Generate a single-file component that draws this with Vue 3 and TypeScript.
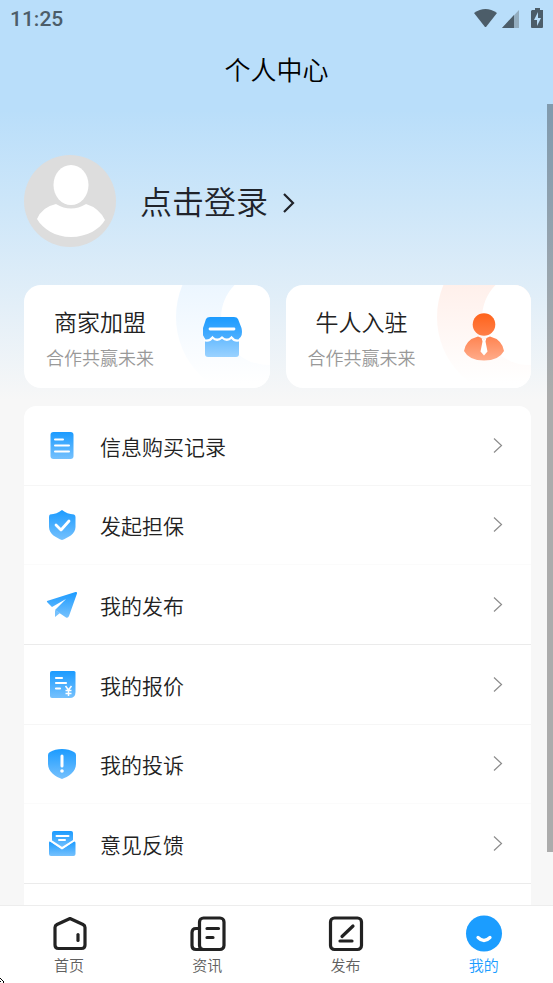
<script setup lang="ts">
import { ref } from 'vue'

interface Entry {
  key: string
  label: string
}

const promos: Entry[] = [
  { key: 'shop', label: '商家加盟' },
  { key: 'expert', label: '牛人入驻' },
]

const entries: Entry[] = [
  { key: 'records', label: '信息购买记录' },
  { key: 'guarantee', label: '发起担保' },
  { key: 'posts', label: '我的发布' },
  { key: 'quotes', label: '我的报价' },
  { key: 'complaints', label: '我的投诉' },
  { key: 'feedback', label: '意见反馈' },
]

const tabs: Entry[] = [
  { key: 'home', label: '首页' },
  { key: 'news', label: '资讯' },
  { key: 'publish', label: '发布' },
  { key: 'mine', label: '我的' },
]

const active = ref('mine')
</script>

<template>
  <div class="app">
    <svg class="defs" width="0" height="0" aria-hidden="true">
      <defs>
        <linearGradient id="blue" x1="0" y1="0" x2="0" y2="1">
          <stop offset="0" stop-color="#1b9bff" />
          <stop offset="1" stop-color="#76c1fd" />
        </linearGradient>
        <linearGradient id="blueRoof" x1="0" y1="0" x2="0" y2="1">
          <stop offset="0" stop-color="#1b9bff" />
          <stop offset="1" stop-color="#4fb0ff" />
        </linearGradient>
        <linearGradient id="blueLight" x1="0" y1="0" x2="0" y2="1">
          <stop offset="0" stop-color="#65baff" />
          <stop offset="1" stop-color="#9ad2ff" />
        </linearGradient>
        <linearGradient id="orange" x1="0" y1="0" x2="0" y2="1">
          <stop offset="0" stop-color="#ff631b" />
          <stop offset="1" stop-color="#ff7f48" />
        </linearGradient>
        <linearGradient id="orangeLight" x1="0" y1="0" x2="0" y2="1">
          <stop offset="0" stop-color="#ff8451" />
          <stop offset="1" stop-color="#ffac8b" />
        </linearGradient>
        <linearGradient id="ring-shop" gradientUnits="userSpaceOnUse" x1="0" y1="0" x2="0" y2="98">
          <stop offset="0" stop-color="#ecf6ff" />
          <stop offset="1" stop-color="#ffffff" />
        </linearGradient>
        <linearGradient id="ring-expert" gradientUnits="userSpaceOnUse" x1="0" y1="0" x2="0" y2="98">
          <stop offset="0" stop-color="#fff0eb" />
          <stop offset="1" stop-color="#ffffff" />
        </linearGradient>
      </defs>
    </svg>

    <header class="top">
      <div class="status">
        <span class="clock">11:25</span>
        <svg class="signals" width="72" height="22" viewBox="0 0 72 22" aria-hidden="true">
          <path d="M0 5Q11.500-3 23 5L12 19h-1z" fill="#4c5d69" />
          <path d="M45 2v18H28z" fill="#93adbf" />
          <path d="M40 7v13H28z" fill="#4c5d69" />
          <path d="M58 2h3V0h5v2h3v17a1 1 0 0 1-1 1H58a1 1 0 0 1-1-1V3z" fill="#4c5d69" />
          <path d="M64 4l-4 8h3v6l4-8h-3z" fill="#b9defa" />
        </svg>
      </div>
      <h1 class="title">个人中心</h1>
    </header>

    <main class="content">
      <a class="login" href="#login">
        <svg class="avatar" viewBox="0 0 92 92" aria-hidden="true">
          <circle cx="46" cy="46" r="46" fill="#dddddd" />
          <ellipse cx="47" cy="30" rx="17.500" ry="20" fill="#fff" />
          <path d="M32 49Q18 52 13 64c6 10 18 18 34 18s29-8 34-17Q75 53 62 49Q47 58 32 49z" fill="#fff" />
        </svg>
        <span class="login-text">点击登录</span>
        <svg class="go" width="12" height="20" viewBox="0 0 12 20" aria-hidden="true">
          <path d="M1 1l9 9-9 9" fill="none" stroke="#20232a" stroke-width="2.200" />
        </svg>
      </a>

      <section class="promos">
        <a v-for="p in promos" :key="p.key" class="promo" :href="'#' + p.key">
          <svg class="ring" width="94" height="103" viewBox="0 0 94 103" aria-hidden="true">
            <circle cx="82" cy="32" r="82" :fill="`url(#ring-${p.key})`" />
            <circle cx="92" cy="33" r="47" fill="#fff" />
          </svg>
          <span class="promo-text">
            <strong>{{ p.label }}</strong>
            <small>合作共赢未来</small>
          </span>
          <svg v-if="p.key === 'shop'" class="promo-icon" viewBox="0 0 40 48" aria-hidden="true">
            <path d="M2 24h34v17q0 3-3 3H5q-3 0-3-3z" fill="url(#blueLight)" />
            <path d="M7 4h24q3 0 4 2l3.500 9q2 9-4 11.500q-3 .500-6-2.500q-4.500 4-9.500 0q-5 4-9.500 0q-3 3-6 2.500Q-2 23 0 15L3 6q1-2 4-2z" fill="url(#blueRoof)" />
            <path d="M1 27q5 2 8.500-2.500q4.500 4.500 9.500 0q5 4.500 9.500 0q3.500 4.500 8.500 2.500" fill="none" stroke="#fff" stroke-width="2.200" />
            <path d="M7 16h24" stroke="#fff" stroke-width="2.800" stroke-linecap="round" />
          </svg>
          <svg v-else class="promo-icon" viewBox="0 0 40 48" aria-hidden="true">
            <circle cx="20" cy="11.500" r="11.300" fill="url(#orange)" />
            <path d="M14 23.500q3 1 6 3q3-2 6-3q12 3 14 14.500q-5 9.500-20 9.500T0 38Q2 26.500 14 23.500z" fill="url(#orangeLight)" />
            <path d="M17.500 24.500l2.500 2 2.500-2-1 4 2 10-3.500 4-3.500-4 2-10z" fill="#fff" />
          </svg>
        </a>
      </section>

      <nav class="list" aria-label="功能">
        <a v-for="e in entries" :key="e.key" class="row" :href="'#' + e.key">
          <svg class="row-icon" viewBox="0 0 30 30" aria-hidden="true">
            <template v-if="e.key === 'records'">
              <rect x="3.500" y="1" width="23" height="27" rx="3" fill="url(#blue)" />
              <path d="M8 8.500h8M8 14.500h14M8 20.500h14" stroke="#fff" stroke-width="2" stroke-linecap="round" />
            </template>
            <template v-else-if="e.key === 'guarantee'">
              <path d="M15 0Q20 4 27 4.500Q28.500 5 28.500 7v10c0 7-8 11-13.500 13C9.500 28 2 24 2 17V7Q2 5 3 4.500Q10 4 15 0z" fill="url(#blue)" />
              <path d="M9 15l5 5 8-9" fill="none" stroke="#fff" stroke-width="2.800" stroke-linecap="round" stroke-linejoin="round" />
            </template>
            <template v-else-if="e.key === 'posts'">
              <path d="M0 11L28.500 2Q30.500 1.500 30 3.500L22 26q-1 2.500-3 1.500L8 20 19 9 5 17 .500 12.500Q-.500 11.500 0 11z" fill="url(#blue)" />
              <path d="M8 20l5 3-5 4z" fill="#76c1fd" />
            </template>
            <template v-else-if="e.key === 'quotes'">
              <path d="M5 1h22q1.500 0 1.500 1.500V22q0 6-6 6H5q-2 0-2-2V3q0-2 2-2z" fill="url(#blue)" />
              <path d="M9 8h6M9 13h10M9 18.500h4" stroke="#fff" stroke-width="2.200" stroke-linecap="round" />
              <path d="M18.500 16l3 4 3-4M21.500 20v6M18.500 20.500h6M18.500 23.500h6" fill="none" stroke="#fff" stroke-width="1.500" />
            </template>
            <template v-else-if="e.key === 'complaints'">
              <path d="M15 0Q22 0 27 3q2 1 2 3v9c0 8-8 13-14 15C9 28 1 23 1 15V6q0-2 2-3Q8 0 15 0z" fill="url(#blue)" />
              <path d="M15 7v10" stroke="#fff" stroke-width="3" stroke-linecap="round" />
              <circle cx="15" cy="22" r="1.800" fill="#fff" />
            </template>
            <template v-else>
              <path d="M7 2h17q2 0 2 2v9l-11 6-10-6V4q0-2 2-2z" fill="url(#blue)" />
              <path d="M3 12.500L15 20.500 27 12.500q1.500-.5 1.500 1.500v11q0 2-2 2H4q-2 0-2-2V14q0-2 1-1.500z" fill="url(#blue)" />
              <path d="M3.500 11.500L15 19 27 11.500" fill="none" stroke="#fff" stroke-width="2" />
              <path d="M9.500 7h12M12 11h6" stroke="#fff" stroke-width="2" stroke-linecap="round" />
            </template>
          </svg>
          <span class="row-label">{{ e.label }}</span>
          <svg class="more" width="10" height="16" viewBox="0 0 10 16" aria-hidden="true">
            <path d="M1 .500l7.500 7L1 14.500" fill="none" stroke="#8c8c8c" stroke-width="1.200" />
          </svg>
        </a>
        <div class="rest"></div>
      </nav>
      <div class="scrollbar"></div>
    </main>

    <nav class="tabs" aria-label="主导航">
      <button
        v-for="t in tabs"
        :key="t.key"
        type="button"
        class="tab"
        :class="{ active: t.key === active }"
        @click="active = t.key"
      >
        <svg class="tab-icon" viewBox="0 0 36 36" fill="none" stroke="#222" stroke-width="3.200" stroke-linecap="round" stroke-linejoin="round" aria-hidden="true">
          <template v-if="t.key === 'home'">
            <path d="M19 2.500L32 8.500q2 1 2 3V29q0 3.500-3.500 3.500h-23Q4 32.500 4 29V11.500q0-2 2-3z" />
            <path d="M27 18.500v6" />
          </template>
          <template v-else-if="t.key === 'news'">
            <rect x="10.500" y="2" width="24.500" height="31.500" rx="4" />
            <path d="M10.500 12.500H7q-4 0-4 4v13q0 4 4 4h7" />
            <path d="M18 12.500h11.500M18 21.500h6" />
          </template>
          <template v-else-if="t.key === 'publish'">
            <rect x="2.500" y="2" width="31" height="31.500" rx="4" />
            <path d="M14 20.500L25 10M12 25h12" />
          </template>
          <template v-else>
            <circle cx="18" cy="17.500" r="18" fill="#1b9dff" stroke="none" />
            <path d="M12 21.500q6 6 12 0" stroke="#fff" />
          </template>
        </svg>
        <span>{{ t.label }}</span>
      </button>
    </nav>

    <svg class="pointer" width="5" height="5" viewBox="0 0 5 5" aria-hidden="true">
      <path d="M0 0h1v1H0zM1 1h1v1H1zM0 3h1v1H0zM2 2h1v1H2zM3 3h1v1H3zM3 4h1v1H3z" fill="#000" />
    </svg>
  </div>
</template>

<style>
body {
  margin: 0;
}
</style>

<style scoped>
.app {
  position: relative;
  display: flex;
  flex-direction: column;
  height: 100vh;
  overflow: hidden;
  font-family: "Noto Sans CJK SC", sans-serif;
  font-weight: 350;
  color: #222;
  background: linear-gradient(#b9defa 110px, #f7f7f7 400px);
}

a {
  color: inherit;
  text-decoration: none;
}

.defs,
.pointer {
  position: absolute;
}

.pointer {
  left: 0;
  bottom: 0;
}

.top {
  flex: none;
  height: 104px;
}

.status {
  display: flex;
  align-items: center;
  justify-content: space-between;
  height: 38px;
  padding: 0 7px 0 10px;
}

.clock {
  font: 500 21px/40px Roboto, sans-serif;
  color: #4c5d69;
}

.title {
  margin: 0;
  font-size: 26px;
  font-weight: inherit;
  line-height: 62px;
  text-align: center;
  color: #000;
}

.content {
  position: relative;
  flex: 1;
  min-height: 0;
  padding: 51px 22px 0 24px;
  overflow: hidden;
}

.login {
  display: flex;
  align-items: center;
  font-size: 32px;
  line-height: 44px;
  color: #20232a;
}

.login-text {
  padding-bottom: 2px;
}

.avatar {
  width: 92px;
  height: 92px;
  margin-right: 24px;
}

.go {
  margin: 4px 0 0 15px;
}

.promos {
  display: grid;
  grid-template-columns: 1fr 1fr;
  gap: 16px;
  margin: 38px 0 18px;
}

.promo {
  position: relative;
  display: flex;
  align-items: center;
  justify-content: space-between;
  height: 103px;
  box-sizing: border-box;
  padding: 0 27px 0 22px;
  border-radius: 17px;
  background: #fff;
  overflow: hidden;
}

.ring {
  position: absolute;
  top: 0;
  right: 0;
}

.promo-text {
  display: flex;
  flex-direction: column;
  align-items: center;
  gap: 4px;
}

.promo-text strong {
  font-size: 23px;
  font-weight: inherit;
  line-height: 36px;
}

.promo-text small {
  font-size: 18px;
  line-height: 28px;
  color: #999;
}

.promo-icon {
  position: relative;
  width: 40px;
  height: 48px;
}

.list {
  border-radius: 12px 12px 0 0;
  background: #fff;
}

.row {
  display: flex;
  align-items: center;
  box-sizing: border-box;
  height: 80px;
  padding: 0 28px 0 23px;
  border-bottom: 1px solid #ebebeb;
  font-size: 21px;
}

.row:nth-child(3n + 1) {
  border-color: #f6f6f6;
}

.row:nth-child(3n + 2) {
  height: 79px;
  border-color: #fbfbfb;
}

.row-icon {
  width: 30px;
  height: 30px;
  overflow: visible;
}

.row-label {
  flex: 1;
  margin-left: 23px;
  line-height: 30px;
}

.rest {
  height: 80px;
}

.scrollbar {
  position: absolute;
  top: 0;
  right: 0;
  width: 6px;
  height: calc(100% - 53px);
  background: rgba(0, 0, 0, 0.3);
}

.tabs {
  display: flex;
  flex: none;
  height: 77px;
  border-top: 1px solid #ededed;
  background: #fff;
}

.tab {
  display: flex;
  flex: 1;
  flex-direction: column;
  align-items: center;
  gap: 2px;
  padding: 10px 0 0;
  border: 0;
  background: none;
  font: inherit;
  font-size: 15px;
  line-height: 22px;
  color: #606060;
}

.tab-icon {
  width: 36px;
  height: 36px;
  overflow: visible;
}

.tab.active {
  color: #1b9dff;
}
</style>
